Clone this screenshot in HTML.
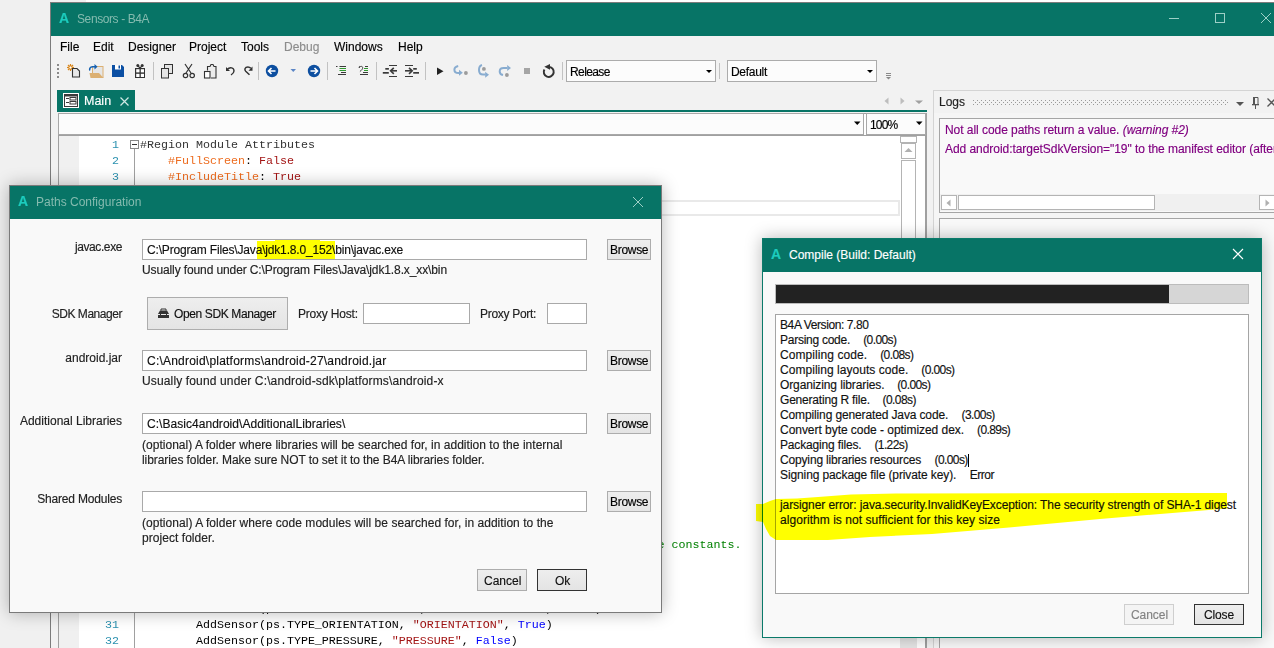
<!DOCTYPE html>
<html><head><meta charset="utf-8">
<style>
*{margin:0;padding:0;box-sizing:border-box}
html,body{width:1274px;height:648px;overflow:hidden;background:#f0f0f0;font-family:"Liberation Sans",sans-serif;font-size:12px;color:#000}
.a{position:absolute}
.t{position:absolute;white-space:pre;line-height:1;-webkit-text-stroke:0.15px currentColor}
.teal{background:#077466}
.mono{font-family:"Liberation Mono",monospace;font-size:11.67px}
.inp{position:absolute;background:#fff;border:1px solid #a9a9a9}
.btn{position:absolute;background:linear-gradient(#eeeeee,#e4e4e4);border:1px solid #adadad}
</style></head><body>
<!-- top strip -->
<div class="a" style="left:86px;top:0;width:1188px;height:2px;background:#fff"></div>

<!-- MAIN WINDOW -->
<div class="a" style="left:50px;top:2px;width:1230px;height:650px;border:1px solid #7c7c7c;background:#f2f2f2"></div>
<div class="a teal" style="left:51px;top:3px;width:1223px;height:33px"></div>
<div class="t" style="left:59px;top:11px;font-size:14px;font-weight:bold;color:#1ccbbd">A</div>
<div class="t" style="left:77px;top:13px;font-size:12px;color:#85bbaf;-webkit-text-stroke:0;letter-spacing:-0.4px">Sensors - B4A</div>

<!-- MENU -->
<div class="t" style="left:60px;top:41px">File</div>
<div class="t" style="left:93px;top:41px">Edit</div>
<div class="t" style="left:128px;top:41px">Designer</div>
<div class="t" style="left:189px;top:41px">Project</div>
<div class="t" style="left:241px;top:41px">Tools</div>
<div class="t" style="left:284px;top:41px;color:#8d8d8d">Debug</div>
<div class="t" style="left:334px;top:41px">Windows</div>
<div class="t" style="left:398px;top:41px">Help</div>

<!-- dropdowns -->
<div class="inp" style="left:566px;top:60px;width:150px;height:22px;background:#fcfcfc;border-color:#acacac"></div>
<div class="t" style="left:570px;top:66px;letter-spacing:-0.6px">Release</div>
<div class="inp" style="left:727px;top:60px;width:150px;height:22px;background:#fcfcfc;border-color:#acacac"></div>
<div class="t" style="left:731px;top:66px;letter-spacing:-0.3px">Default</div>


<!-- TOOLBAR ICONS -->
<svg class="a" style="left:0;top:0" width="1274" height="100" viewBox="0 0 1274 100">
<g fill="#8a8a8a"><rect x="57" y="64" width="2" height="2"/><rect x="57" y="68" width="2" height="2"/><rect x="57" y="72" width="2" height="2"/><rect x="57" y="76" width="2" height="2"/></g>
<!-- new -->
<g stroke="#d9861a" stroke-width="1.2"><line x1="70.5" y1="64" x2="70.5" y2="71"/><line x1="67" y1="67.5" x2="74" y2="67.5"/><line x1="68" y1="65" x2="73" y2="70"/><line x1="73" y1="65" x2="68" y2="70"/></g>
<circle cx="70.5" cy="67.5" r="1.6" fill="#fff" stroke="#d9861a" stroke-width="1"/>
<path d="M72.5 68.5h4.5l2.5 2.5v6h-7z" fill="#e8e8e8" stroke="#333" stroke-width="1.1"/>
<!-- open -->
<rect x="92.5" y="66.5" width="10.5" height="11" fill="#e6e6e6" stroke="#dcb072" stroke-width="1"/>
<path d="M89.5 73h9.5l4.5 5h-13z" fill="#dcb072"/>
<path d="M90 70.5c-1-1.5 0-3.5 2.5-3.8h2.5" fill="none" stroke="#1560b0" stroke-width="1.5"/>
<path d="M94.5 64l3 2.7l-3 2.7z" fill="#1560b0"/>
<!-- save -->
<path d="M112 65h10l2 2v10h-12z" fill="#0b4fa3"/>
<rect x="115" y="65" width="6" height="4.5" fill="#fff"/><rect x="118.5" y="65.5" width="1.5" height="3" fill="#0b4fa3"/>
<!-- gift -->
<rect x="135" y="68" width="10" height="10" fill="#333"/>
<g fill="#fff"><rect x="136.2" y="69.2" width="3.3" height="3.2"/><rect x="140.8" y="69.2" width="3.2" height="3.2"/><rect x="136.2" y="73.8" width="3.3" height="3.2"/><rect x="140.8" y="73.8" width="3.2" height="3.2"/></g>
<circle cx="137.8" cy="65.6" r="1.5" fill="#333"/><circle cx="142.2" cy="65.6" r="1.5" fill="#333"/><path d="M138 66l2 2l2-2" fill="none" stroke="#333" stroke-width="1.2"/>
<rect x="153" y="62" width="1" height="18" fill="#c2c2c2"/>
<!-- copy -->
<rect x="164.5" y="64.5" width="8" height="9" fill="#e4e4e4" stroke="#333" stroke-width="1"/>
<rect x="161.5" y="68.5" width="7" height="9.5" fill="#e4e4e4" stroke="#333" stroke-width="1"/>
<!-- cut -->
<g fill="none" stroke="#333" stroke-width="1.2"><path d="M185 64l6 9M192 64l-6 9"/><circle cx="185.5" cy="75.5" r="2.2"/><circle cx="192.2" cy="75.5" r="2.2"/></g>
<!-- paste -->
<path d="M207.5 70.5v-4h2.5l1-2h2l1 2h2v11.5h-5" fill="#ececec" stroke="#333" stroke-width="1.1"/>
<rect x="204.5" y="71.5" width="5.5" height="6.5" fill="#fff" stroke="#333" stroke-width="1.1"/>
<!-- undo/redo -->
<path d="M227 69.5c3-3 7-2 7 1.5c0 2-1.5 3-3 4" fill="none" stroke="#333" stroke-width="1.4"/>
<path d="M226 67v4h4z" fill="#333"/>
<path d="M249.5 74.8l-3.8-3.6c-1.6-1.6-0.8-4.3 2.2-4.3c1.2 0 2.2 0.5 3 1.3" fill="none" stroke="#333" stroke-width="1.5"/>
<path d="M252.5 66.5v4.2h-4z" fill="#333"/>
<rect x="258" y="62" width="1" height="18" fill="#c2c2c2"/>
<!-- back/fwd -->
<circle cx="272" cy="71" r="6.2" fill="#0d4fa0"/><path d="M275.5 71h-6M271.5 68l-3 3l3 3" fill="none" stroke="#fff" stroke-width="1.6"/>
<path d="M290.5 69h5.5l-2.75 3z" fill="#5c86c6"/>
<circle cx="314" cy="71" r="6.2" fill="#0d4fa0"/><path d="M310.5 71h6M314.5 68l3 3l-3 3" fill="none" stroke="#fff" stroke-width="1.6"/>
<rect x="327" y="62" width="1" height="18" fill="#c2c2c2"/>
<!-- indent lines -->
<g fill="#3a3a3a"><rect x="336" y="66" width="1.5" height="1"/><rect x="339.5" y="66" width="6.5" height="1"/><rect x="341" y="72" width="5" height="1"/><rect x="338" y="74" width="8" height="1"/></g>
<g fill="#2f9a2f"><rect x="339.5" y="68" width="6.5" height="1"/><rect x="339.5" y="70" width="6.5" height="1"/></g>
<path d="M358.3 67.5l1.5-1.8l0.3 2.3z" fill="#3a3a3a"/><path d="M359.5 67c1.5-1 3-0.8 3.2 0.6c0.2 1.4-1.5 2.8-2.8 4" fill="none" stroke="#3a3a3a" stroke-width="1"/>
<g fill="#3a3a3a"><rect x="365" y="66" width="3" height="1"/><rect x="363" y="72" width="5" height="1"/><rect x="360" y="74" width="8" height="1"/></g>
<g fill="#2f9a2f"><rect x="364" y="68" width="4" height="1"/><rect x="364" y="70" width="4" height="1"/></g>
<rect x="376" y="62" width="1" height="18" fill="#c2c2c2"/>
<!-- outdent/indent -->
<g fill="#3a3a3a"><rect x="389" y="65" width="8" height="1"/><rect x="385.3" y="68" width="3.6" height="1.7"/><rect x="382.8" y="72" width="6" height="1.7"/><rect x="391" y="70" width="6" height="1.6"/><rect x="389" y="76" width="8" height="1"/></g>
<path d="M393.8 67.8l-3.2 3l3.2 3" fill="none" stroke="#3a3a3a" stroke-width="1.6"/>
<g fill="#3a3a3a"><rect x="405" y="65" width="8" height="1"/><rect x="413.2" y="68" width="3.6" height="1.7"/><rect x="413.2" y="72" width="5.8" height="1.7"/><rect x="405" y="70" width="6" height="1.6"/><rect x="405" y="76" width="8" height="1"/></g>
<path d="M409 67.8l3.2 3l-3.2 3" fill="none" stroke="#3a3a3a" stroke-width="1.6"/>
<rect x="425" y="62" width="1" height="18" fill="#c2c2c2"/>
<!-- run/debug -->
<path d="M437 67.5v7.5l6.5-3.75z" fill="#222"/>
<path d="M458.2 66c-2.5 0.5-3.8 2-3.8 3.8c0 2 1.5 3.3 4 3.3h2" fill="none" stroke="#88acd0" stroke-width="2"/><path d="M459 69.8l3.8 3l-3.8 3z" fill="#88acd0"/><circle cx="465.9" cy="73" r="1.9" fill="#9c9c9c"/>
<path d="M482 65c-2 0.5-3 2.5-3 5c0 2.8 1.5 4.6 4 4.6h2.5" fill="none" stroke="#88acd0" stroke-width="2"/><path d="M485.2 71.8l3.8 3l-3.8 3z" fill="#88acd0"/><circle cx="483.9" cy="68.9" r="1.9" fill="#9c9c9c"/>
<path d="M503 75c-2-0.5-3.3-2-3.3-3.6c0-2 1.6-3.3 4-3.3h3.5" fill="none" stroke="#88acd0" stroke-width="2"/><path d="M507.2 65l3.8 3l-3.8 3z" fill="#88acd0"/><circle cx="506.9" cy="75" r="1.9" fill="#9c9c9c"/>
<rect x="524" y="68" width="6" height="6" fill="#a5a5a5"/>
<path d="M548.7 66.9A5 5 0 1 1 544.4 69.4" fill="none" stroke="#333" stroke-width="2"/><path d="M544.3 66.8L550 64L550 69.7Z" fill="#333"/>
<rect x="562" y="62" width="1" height="18" fill="#c2c2c2"/>
<rect x="719" y="63" width="1" height="16" fill="#c2c2c2"/>
<!-- combo arrows -->
<path d="M706 70h6l-3 3z" fill="#000"/><path d="M867 70h6l-3 3z" fill="#000"/>
<g fill="#8a8a8a"><rect x="886" y="73" width="5" height="1"/><rect x="886" y="75" width="5" height="1"/><path d="M886 77h5l-2.5 2.5z"/></g>
<!-- window controls -->
<rect x="1169" y="18" width="10" height="1" fill="#9dcfc6"/>
<rect x="1215.5" y="13.5" width="9" height="9" fill="none" stroke="#9dcfc6" stroke-width="1"/>
<path d="M1261 13l10 10M1271 13l-10 10" stroke="#9dcfc6" stroke-width="1"/>
</svg>

<!-- TAB -->
<div class="a teal" style="left:57px;top:90px;width:78px;height:22px"></div>
<div class="a teal" style="left:57px;top:110px;width:870px;height:2px"></div>
<svg class="a" style="left:63px;top:93px" width="16" height="15"><rect x="0" y="0" width="16" height="15" fill="#fff"/><rect x="1" y="1" width="14" height="13" fill="#3a3a3a"/><rect x="2" y="3.5" width="12" height="9.5" fill="#fff"/><rect x="3" y="5" width="3" height="1" fill="#3a3a3a"/><rect x="7" y="4.5" width="6" height="2.5" fill="none" stroke="#3a3a3a" stroke-width="1"/><rect x="3" y="9" width="3" height="1" fill="#3a3a3a"/><rect x="7" y="8.5" width="6" height="2.5" fill="none" stroke="#3a3a3a" stroke-width="1"/></svg>
<div class="t" style="left:84px;top:95px;color:#fff;font-size:12.5px">Main</div>
<svg class="a" style="left:120px;top:97px" width="9" height="9"><path d="M0.5 0.5l8 8M8.5 0.5l-8 8" stroke="#cfe8e3" stroke-width="1.2"/></svg>

<svg class="a" style="left:880px;top:94px" width="46" height="14"><path d="M8.5 3.5v7l-4-3.5z" fill="#bdbdbd"/><path d="M20.5 3.5v7l4-3.5z" fill="#bdbdbd"/><path d="M35 6.5h8l-4 3.5z" fill="#a0a0a0"/></svg>
<!-- EDITOR -->
<div class="a" style="left:58px;top:113px;width:869px;height:540px;background:#fff;border:1px solid #a0a0a0;border-right:2px solid #a0a0a0;border-bottom:none"></div>
<div class="a" style="left:58px;top:113px;width:806px;height:22px;background:#fcfcfc;border:1px solid #a8a8a8"></div>
<div class="a" style="left:866px;top:113px;width:60px;height:22px;background:#fcfcfc;border:1px solid #a8a8a8"></div>
<div class="a" style="left:59px;top:135px;width:866px;height:1px;background:#a0a0a0"></div>
<svg class="a" style="left:0;top:0" width="1274" height="648" viewBox="0 0 1274 648">
<path d="M854 121.5h6.5l-3.25 3.5z" fill="#000"/><path d="M916 121.5h6.5l-3.25 3.5z" fill="#000"/>
</svg>
<div class="t" style="left:870px;top:119px;letter-spacing:-0.8px">100%</div>
<div class="a" style="left:59px;top:136px;width:20px;height:520px;background:#f0f0f0"></div>
<div class="a" style="left:134px;top:149px;width:1px;height:500px;background:#a0a0a0"></div>
<svg class="a" style="left:130px;top:140px" width="9" height="9"><rect x="0.5" y="0.5" width="8" height="8" fill="#fff" stroke="#888"/><rect x="2" y="4" width="5" height="1" fill="#333"/></svg>
<!-- current line highlight -->
<div class="a" style="left:79px;top:200px;width:821px;height:16px;border:2px solid #e9e9e9"></div>
<!-- scrollbar -->
<div class="a" style="left:900px;top:600px;width:17px;height:60px;background:#e6e6e6"></div>
<div class="a" style="left:901px;top:160px;width:15px;height:460px;background:#fff;border:1px solid #b4b4b4"></div>
<div class="a" style="left:900px;top:136px;width:17px;height:7px;background:#fff;border:1px solid #b4b4b4"></div>
<div class="a" style="left:901px;top:143px;width:15px;height:16px;background:#fff;border:1px solid #b4b4b4"></div>
<svg class="a" style="left:904px;top:147px" width="9" height="6"><path d="M0.5 5h8l-4-4z" fill="#b0b0b0"/></svg>

<!-- code -->
<div class="a mono" style="left:80px;top:137px;width:39px;color:#2b91af;text-align:right;line-height:16px">
<div style="position:absolute;right:0;top:0">1</div>
<div style="position:absolute;right:0;top:16px">2</div>
<div style="position:absolute;right:0;top:32px">3</div>
<div style="position:absolute;right:0;top:464px">30</div>
<div style="position:absolute;right:0;top:480px">31</div>
<div style="position:absolute;right:0;top:496px">32</div>
</div>
<div class="a mono" style="left:140px;top:137px;width:800px;line-height:16px;white-space:pre;color:#000">
<div style="position:absolute;top:0;color:#333">#Region Module Attributes</div>
<div style="position:absolute;top:16px">    <span style="color:#ed6b1d">#FullScreen</span>: <span style="color:#a31515">False</span></div>
<div style="position:absolute;top:32px">    <span style="color:#ed6b1d">#IncludeTitle</span>: <span style="color:#a31515">True</span></div>
<div style="position:absolute;top:400px;color:#008000">    'Each sensor is registered with a name and a flag, use the names of the constants.</div>
<div style="position:absolute;top:464px">        AddSensor(ps.TYPE_MAGNETIC_FIELD, <span style="color:#a31515">"MAGNETIC_FIELD"</span>, <span style="color:#0000ff">False</span>)</div>
<div style="position:absolute;top:480px">        AddSensor(ps.TYPE_ORIENTATION, <span style="color:#a31515">"ORIENTATION"</span>, <span style="color:#0000ff">True</span>)</div>
<div style="position:absolute;top:496px">        AddSensor(ps.TYPE_PRESSURE, <span style="color:#a31515">"PRESSURE"</span>, <span style="color:#0000ff">False</span>)</div>
</div>

<!-- LOGS -->
<div class="a" style="left:933px;top:90px;width:350px;height:560px;background:#f2f2f2;border:1px solid #d4d4d4"></div>
<div class="a" style="left:934px;top:113px;width:340px;height:540px;background:#f5f5f5"></div>
<div class="t" style="left:939px;top:96px;color:#1e1e1e">Logs</div>
<svg class="a" style="left:973px;top:100px" width="256" height="6"><defs><pattern id="dots" width="4" height="4" patternUnits="userSpaceOnUse"><rect x="0" y="0" width="1" height="1" fill="#9a9a9a"/><rect x="2" y="2" width="1" height="1" fill="#9a9a9a"/></pattern></defs><rect x="0" y="0" width="256" height="5" fill="url(#dots)"/></svg>
<svg class="a" style="left:1230px;top:94px" width="44" height="16">
<path d="M6 8h8l-4 4z" fill="#555"/>
<path d="M23.5 3.5h4.5v6.5" fill="none" stroke="#555" stroke-width="1"/><rect x="23" y="3" width="2" height="7" fill="#555"/><rect x="22" y="10" width="7" height="1.3" fill="#555"/><rect x="25" y="11" width="1" height="4" fill="#555"/>
<path d="M37.5 4.5l8 8M45.5 4.5l-8 8" stroke="#555" stroke-width="1.3"/>
</svg>
<div class="a" style="left:939px;top:118px;width:340px;height:95px;background:#f9f9f9;border:1px solid #a5a5a5"></div>
<div class="t" style="left:945px;top:124px;color:#800080;letter-spacing:-0.05px">Not all code paths return a value. <i>(warning #2)</i></div>
<div class="t" style="left:945px;top:143px;color:#800080;letter-spacing:-0.05px">Add android:targetSdkVersion="19" to the manifest editor (after</div>
<div class="a" style="left:940px;top:194px;width:338px;height:17px;background:#f0f0f0"></div>
<div class="a" style="left:941px;top:195px;width:16px;height:15px;background:#fff;border:1px solid #b4b4b4"></div>
<svg class="a" style="left:945px;top:199px" width="8" height="9"><path d="M5.5 0.5v7l-4-3.5z" fill="#b0b0b0"/></svg>
<div class="a" style="left:958px;top:195px;width:197px;height:15px;background:#fff;border:1px solid #b4b4b4"></div>
<div class="a" style="left:1259px;top:195px;width:16px;height:15px;background:#fff;border:1px solid #b4b4b4"></div>
<svg class="a" style="left:1263px;top:199px" width="8" height="9"><path d="M2.5 0.5v7l4-3.5z" fill="#b0b0b0"/></svg>
<div class="a" style="left:939px;top:218px;width:340px;height:440px;background:#f9f9f9;border:1px solid #a5a5a5"></div>

<!-- PATHS DIALOG -->
<div class="a" style="left:9px;top:185px;width:653px;height:428px;background:#f9f9f9;border:1px solid #7a7a7a;box-shadow:0 0 16px rgba(0,0,0,.28)"></div>
<div class="a teal" style="left:10px;top:186px;width:651px;height:33px"></div>
<div class="t" style="left:18px;top:194px;font-size:14px;font-weight:bold;color:#1ccbbd">A</div>
<div class="t" style="left:36px;top:196px;color:#85bbaf;-webkit-text-stroke:0">Paths Configuration</div>
<svg class="a" style="left:632px;top:196px" width="12" height="12"><path d="M1 1l10 10M11 1l-10 10" stroke="#9dcfc6" stroke-width="1"/></svg>
<!-- labels -->
<div class="t" style="right:1152px;top:241px;color:#222;letter-spacing:-0.41px">javac.exe</div>
<div class="t" style="right:1152px;top:308px;color:#222;letter-spacing:-0.46px">SDK Manager</div>
<div class="t" style="right:1152px;top:352px;color:#222">android.jar</div>
<div class="t" style="right:1152px;top:415px;color:#222">Additional Libraries</div>
<div class="t" style="right:1152px;top:493px;color:#222;letter-spacing:-0.19px">Shared Modules</div>
<!-- inputs -->
<div class="inp" style="left:142px;top:239px;width:445px;height:21px"></div>
<div class="t" style="left:147px;top:244px;color:#111;letter-spacing:-0.17px">C:\Program Files\Java\jdk1.8.0_152\bin\javac.exe</div>
<div class="a" style="left:257px;top:241px;width:78px;height:18px;background:#ffff00;mix-blend-mode:multiply"></div>
<div class="a" style="left:275px;top:240px;width:45px;height:1px;background:#ffff00;mix-blend-mode:multiply"></div>
<div class="t" style="left:142px;top:264px;color:#222;letter-spacing:-0.114px">Usually found under C:\Program Files\Java\jdk1.8.x_xx\bin</div>
<div class="btn" style="left:147px;top:297px;width:141px;height:33px"></div>
<svg class="a" style="left:157px;top:308px" width="13" height="11"><path d="M4 2.5v-1.5h5v1.5" fill="none" stroke="#333" stroke-width="1"/><path d="M1 6l2-3.5h7l2 3.5v4h-11z" fill="#333"/><rect x="1" y="6" width="11" height="1" fill="#eaeaea"/><rect x="3" y="5.5" width="1" height="2" fill="#333"/><rect x="9" y="5.5" width="1" height="2" fill="#333"/></svg>
<div class="t" style="left:174px;top:308px;color:#111;letter-spacing:-0.38px">Open SDK Manager</div>
<div class="t" style="left:298px;top:308px;color:#222;letter-spacing:-0.2px">Proxy Host:</div>
<div class="inp" style="left:363px;top:303px;width:107px;height:21px"></div>
<div class="t" style="left:480px;top:308px;color:#222;letter-spacing:-0.3px">Proxy Port:</div>
<div class="inp" style="left:547px;top:303px;width:40px;height:21px"></div>
<div class="inp" style="left:142px;top:350px;width:445px;height:21px"></div>
<div class="t" style="left:147px;top:355px;color:#111;letter-spacing:0.216px">C:\Android\platforms\android-27\android.jar</div>
<div class="t" style="left:142px;top:375px;color:#222;letter-spacing:0.14px">Usually found under C:\android-sdk\platforms\android-x</div>
<div class="inp" style="left:142px;top:413px;width:445px;height:21px"></div>
<div class="t" style="left:147px;top:418px;color:#111;letter-spacing:0.04px">C:\Basic4android\AdditionalLibraries\</div>
<div class="t" style="left:142px;top:439px;color:#222;letter-spacing:0.026px">(optional) A folder where libraries will be searched for, in addition to the internal</div>
<div class="t" style="left:142px;top:454px;color:#222;letter-spacing:-0.078px">libraries folder. Make sure NOT to set it to the B4A libraries folder.</div>
<div class="inp" style="left:142px;top:491px;width:445px;height:21px"></div>
<div class="t" style="left:142px;top:517px;color:#222;letter-spacing:0.041px">(optional) A folder where code modules will be searched for, in addition to the</div>
<div class="t" style="left:142px;top:532px;color:#222;letter-spacing:0.05px">project folder.</div>
<!-- browse buttons -->
<div class="btn" style="left:607px;top:239px;width:44px;height:21px"></div><div class="t" style="left:610px;top:244px;color:#000;letter-spacing:-0.3px">Browse</div>
<div class="btn" style="left:607px;top:350px;width:44px;height:21px"></div><div class="t" style="left:610px;top:355px;color:#000;letter-spacing:-0.3px">Browse</div>
<div class="btn" style="left:607px;top:413px;width:44px;height:21px"></div><div class="t" style="left:610px;top:418px;color:#000;letter-spacing:-0.3px">Browse</div>
<div class="btn" style="left:607px;top:491px;width:44px;height:21px"></div><div class="t" style="left:610px;top:496px;color:#000;letter-spacing:-0.3px">Browse</div>
<div class="btn" style="left:477px;top:569px;width:50px;height:22px"></div><div class="t" style="left:484px;top:575px;color:#111">Cancel</div>
<div class="btn" style="left:537px;top:569px;width:50px;height:22px;border-color:#333"></div><div class="t" style="left:555px;top:575px;color:#111">Ok</div>

<!-- COMPILE DIALOG -->
<div class="a" style="left:762px;top:238px;width:500px;height:400px;background:#f9f9f9;border:1px solid #0b7a6a;box-shadow:0 0 16px rgba(0,0,0,.28)"></div>
<div class="a teal" style="left:763px;top:239px;width:498px;height:33px"></div>
<div class="t" style="left:771px;top:247px;font-size:14px;font-weight:bold;color:#1ccbbd">A</div>
<div class="t" style="left:789px;top:249px;color:#fff">Compile (Build: Default)</div>
<svg class="a" style="left:1232px;top:248px" width="12" height="12"><path d="M1 1l10 10M11 1l-10 10" stroke="#fff" stroke-width="1.1"/></svg>
<div class="a" style="left:775px;top:284px;width:474px;height:20px;background:#d6d6d6;border:1px solid #bcbcbc"></div>
<div class="a" style="left:776px;top:285px;width:393px;height:18px;background:#222"></div>
<div class="a" style="left:775px;top:314px;width:474px;height:280px;background:#fff;border:1px solid #a5a5a5"></div>
<div class="t" style="left:780px;top:319px;color:#111;letter-spacing:-0.4px">B4A Version: 7.80</div>
<div class="t" style="left:780px;top:334px;color:#111;letter-spacing:-0.26px">Parsing code.</div>
<div class="t" style="left:863.2px;top:334px;color:#111;letter-spacing:-0.59px">(0.00s)</div>
<div class="t" style="left:780px;top:349px;color:#111;letter-spacing:0.08px">Compiling code.</div>
<div class="t" style="left:880.2px;top:349px;color:#111;letter-spacing:-0.59px">(0.08s)</div>
<div class="t" style="left:780px;top:364px;color:#111;letter-spacing:0.04px">Compiling layouts code.</div>
<div class="t" style="left:921.3px;top:364px;color:#111;letter-spacing:-0.59px">(0.00s)</div>
<div class="t" style="left:780px;top:379px;color:#111;letter-spacing:-0.11px">Organizing libraries.</div>
<div class="t" style="left:897.2px;top:379px;color:#111;letter-spacing:-0.59px">(0.00s)</div>
<div class="t" style="left:780px;top:394px;color:#111;letter-spacing:-0.2px">Generating R file.</div>
<div class="t" style="left:882.6px;top:394px;color:#111;letter-spacing:-0.59px">(0.08s)</div>
<div class="t" style="left:780px;top:409px;color:#111;letter-spacing:-0.13px">Compiling generated Java code.</div>
<div class="t" style="left:961.5px;top:409px;color:#111;letter-spacing:-0.59px">(3.00s)</div>
<div class="t" style="left:780px;top:424px;color:#111;letter-spacing:-0.04px">Convert byte code - optimized dex.</div>
<div class="t" style="left:977px;top:424px;color:#111;letter-spacing:-0.59px">(0.89s)</div>
<div class="t" style="left:780px;top:439px;color:#111;letter-spacing:-0.16px">Packaging files.</div>
<div class="t" style="left:874.4px;top:439px;color:#111;letter-spacing:-0.59px">(1.22s)</div>
<div class="t" style="left:780px;top:454px;color:#111;letter-spacing:-0.16px">Copying libraries resources</div>
<div class="t" style="left:934.5px;top:454px;color:#111;letter-spacing:-0.59px">(0.00s)</div>
<div class="t" style="left:780px;top:469px;color:#111;letter-spacing:-0.11px">Signing package file (private key).</div>
<div class="t" style="left:969.7px;top:469px;color:#111;letter-spacing:-0.47px">Error</div>
<div class="a" style="left:968px;top:454px;width:1px;height:13px;background:#000"></div>
<div class="t" style="left:780px;top:499px;color:#111;letter-spacing:-0.095px">jarsigner error: java.security.InvalidKeyException: The security strength of SHA-1 digest</div>
<div class="t" style="left:780px;top:514px;color:#111;letter-spacing:0.047px">algorithm is not sufficient for this key size</div>
<div class="btn" style="left:1124px;top:604px;width:50px;height:21px;background:#f4f4f4;border-color:#cfcfcf"></div><div class="t" style="left:1131px;top:609px;color:#838383;letter-spacing:-0.06px">Cancel</div>
<div class="btn" style="left:1194px;top:604px;width:50px;height:21px;border-color:#333"></div><div class="t" style="left:1204px;top:609px;color:#111;letter-spacing:-0.14px">Close</div>
<svg class="a" style="left:0;top:0;mix-blend-mode:multiply" width="1274" height="648" viewBox="0 0 1274 648">
<path d="M756 504L763 504L770 501L776 499L797 498.5L818 497L851 494.4L900 493.5L1227 493L1227 508.5L1100 519L1009 527.5L932 534L870 537L828 540L776 540L770 536L766 529L763 522L756 521Z" fill="#ffff00"/>
</svg>
</body></html>
